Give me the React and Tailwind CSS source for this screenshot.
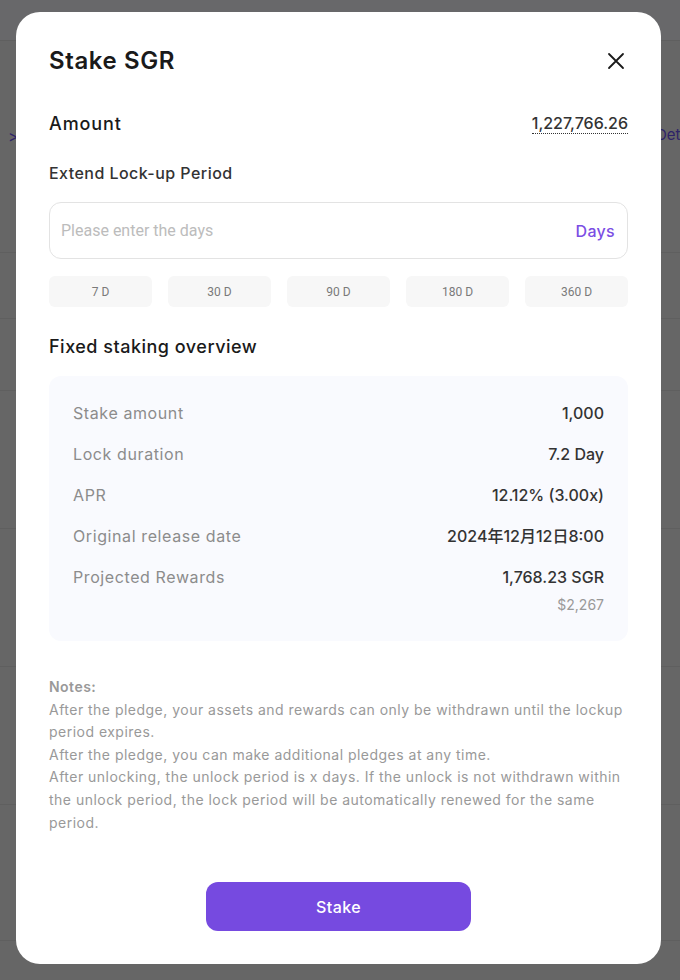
import React from "react";

const F = { fontFamily: "Inter, 'Noto Sans', 'Noto Sans CJK SC', sans-serif" };

function Row({ label, value }) {
  return (
    <div className="flex items-center justify-between h-[41px]">
      <span className="text-[16px] text-[#8c8c8c] tracking-[0.6px]">{label}</span>
      <span className="text-[16px] font-medium text-[#333]">{value}</span>
    </div>
  );
}

export default function App() {
  const lines = [40, 252, 318, 390, 528, 666, 804, 940];
  return (
    <div className="relative w-[680px] h-[980px] bg-[#666666] overflow-hidden" style={F}>
      <div className="absolute inset-x-0 top-0 h-[40px] bg-[#68686a]" />
      {lines.map((y) => (
        <div key={y} className="absolute inset-x-0 h-px bg-[#5f5f5f]" style={{ top: y }} />
      ))}
      <span className="absolute left-[8px] top-[124px] text-[16px] text-[#2e2368]">&gt;</span>
      <span className="absolute left-[656px] top-[124px] text-[15px] text-[#2e2368]">Det</span>

      <div className="absolute left-[16px] top-[12px] w-[645px] h-[952px] bg-white rounded-[24px] px-[33px] pt-[34px] flex flex-col">
        <div className="flex items-center justify-between h-[30px]">
          <h1 className="text-[24px] font-semibold text-[#1a1a1a] tracking-[0.6px]">Stake SGR</h1>
          <svg width="18" height="18" viewBox="0 0 18 18" className="mr-[3px]">
            <path d="M2 2L16 16M16 2L2 16" stroke="#1a1a1a" strokeWidth="1.8" strokeLinecap="round" />
          </svg>
        </div>

        <div className="flex items-center justify-between mt-[35px] h-[24px]">
          <span className="text-[18px] font-medium text-[#1a1a1a] tracking-[0.9px]">Amount</span>
          <span className="text-[16px] font-medium text-[#333] border-b border-dotted border-[#333] leading-[20px]">1,227,766.26</span>
        </div>

        <div className="mt-[27px] text-[16px] font-medium text-[#333] h-[22px] leading-[22px] tracking-[0.45px]">Extend Lock-up Period</div>

        <div className="mt-[18px] h-[57px] border border-[#e3e3e3] rounded-[12px] flex items-center justify-between pl-[11px] pr-[12px]">
          <span className="text-[16px] text-[#bcbcbc]" style={{ fontFamily: "Roboto, sans-serif" }}>Please enter the days</span>
          <span className="text-[16px] font-medium text-[#7b4ee4] tracking-[0.3px]">Days</span>
        </div>

        <div className="mt-[17px] grid grid-cols-5 gap-[16px]">
          {["7 D", "30 D", "90 D", "180 D", "360 D"].map((d) => (
            <div key={d} className="h-[31px] bg-[#f7f7f7] rounded-[6px] flex items-center justify-center text-[12px] text-[#7a7a7a]" style={{ fontFamily: "Roboto, sans-serif" }}>
              {d}
            </div>
          ))}
        </div>

        <div className="mt-[28px] text-[18px] font-medium text-[#1a1a1a] h-[24px] leading-[24px] tracking-[0.5px]">Fixed staking overview</div>

        <div className="mt-[17px] bg-[#f9fafe] rounded-[12px] px-[24px] pt-[16px] pb-[26px]">
          <Row label="Stake amount" value="1,000" />
          <Row label="Lock duration" value="7.2 Day" />
          <Row label="APR" value="12.12% (3.00x)" />
          <Row label="Original release date" value="2024年12月12日8:00" />
          <Row label="Projected Rewards" value="1,768.23 SGR" />
          <div className="text-right text-[14px] text-[#999] -mt-[2px] leading-[20px]">$2,267</div>
        </div>

        <div className="mt-[35px] text-[14px] text-[#999] leading-[22.6px] tracking-[0.48px]">
          <div className="font-semibold">Notes:</div>
          <div>After the pledge, your assets and rewards can only be withdrawn until the lockup period expires.</div>
          <div>After the pledge, you can make additional pledges at any time.</div>
          <div>After unlocking, the unlock period is x days. If the unlock is not withdrawn within the unlock period, the lock period will be automatically renewed for the same period.</div>
        </div>

        <div className="mt-auto mb-[33px] flex justify-center">
          <button className="w-[265px] h-[49px] rounded-[12px] bg-[#764ae0] text-white text-[16px] font-medium tracking-[0.4px]">Stake</button>
        </div>
      </div>
    </div>
  );
}
